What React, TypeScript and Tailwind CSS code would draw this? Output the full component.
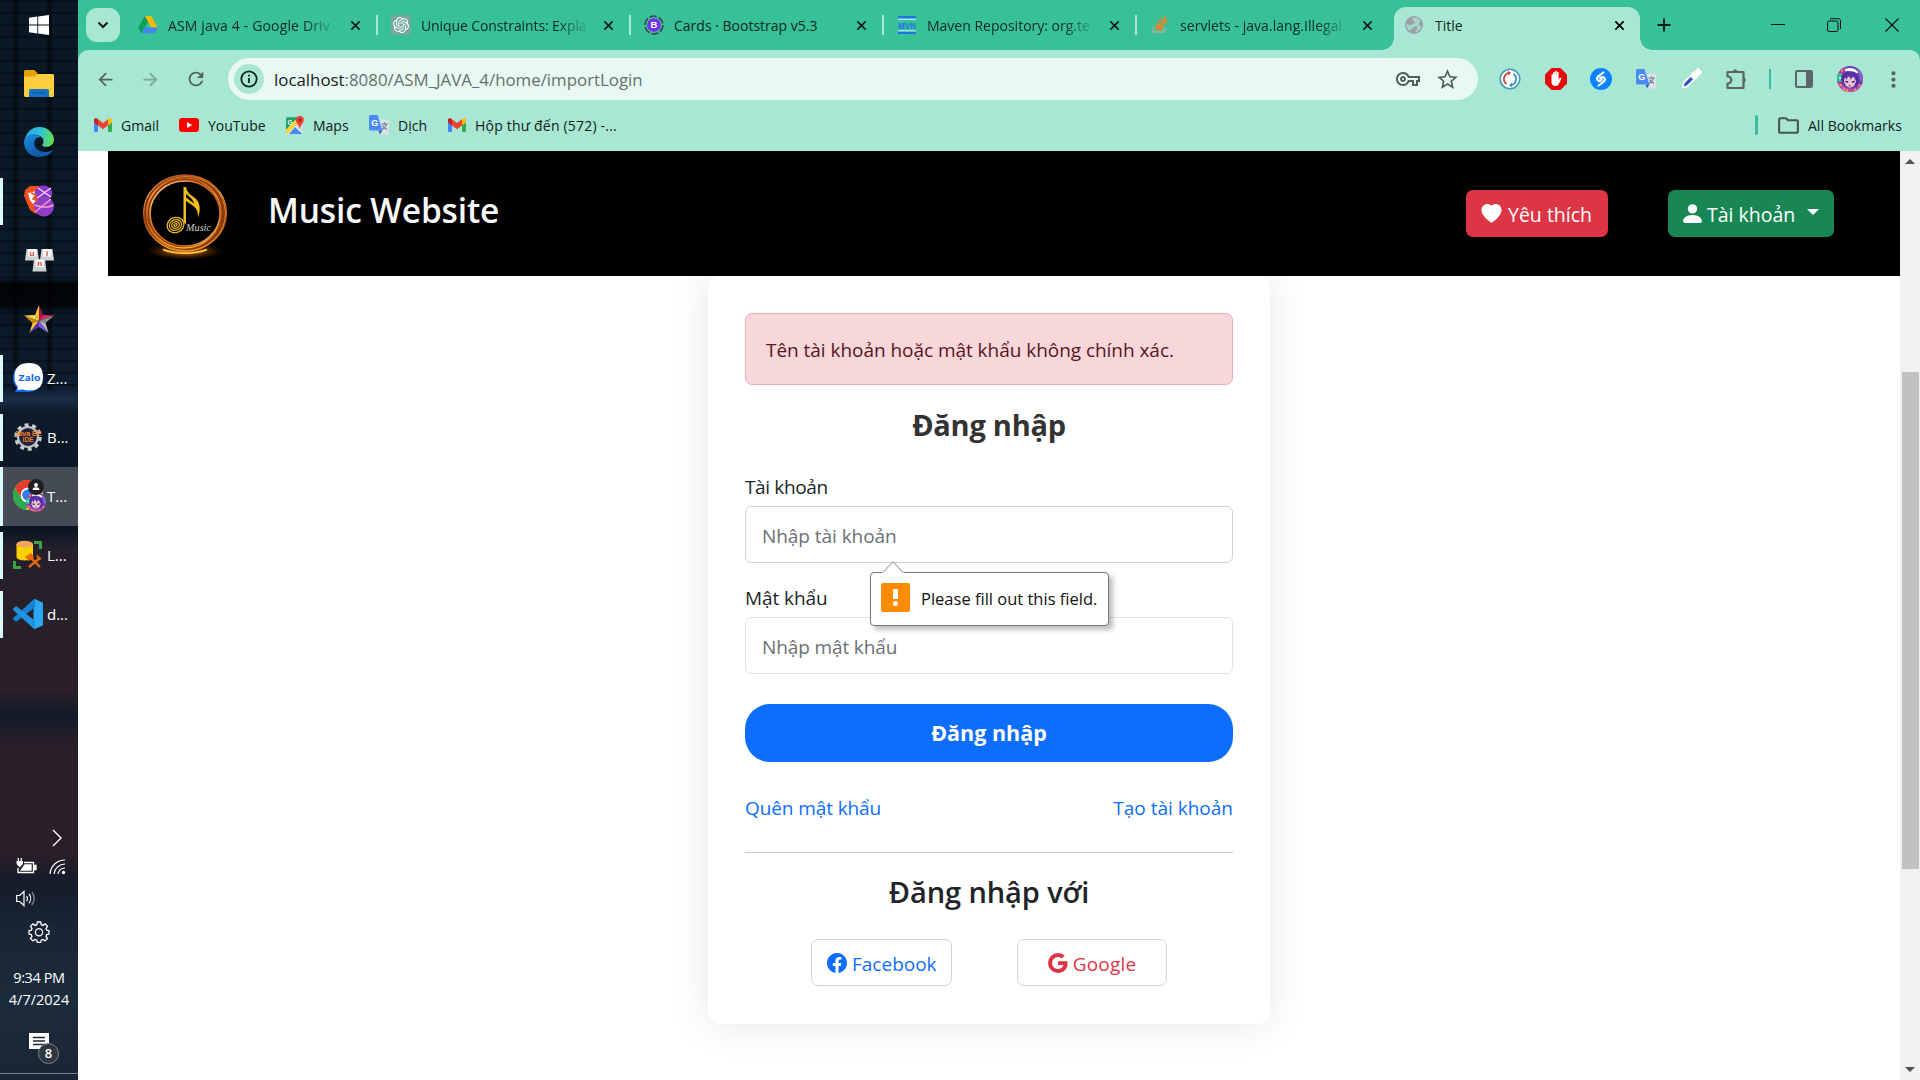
import type { ReactNode } from "react";
import { BsFacebook, BsGoogle, BsHeartFill, BsPersonFill } from "react-icons/bs";
import { MdArrowBack, MdArrowForward, MdMoreVert, MdOutlineFolder, MdOutlineVpnKey, MdRefresh, MdStarBorder } from "react-icons/md";
import { SiOpenai } from "react-icons/si";

/* ---------- shared glyphs ---------- */

function CloseX({ className }: { className: string }) {
  return (
    <svg viewBox="0 0 12 12" className={className} fill="none" stroke="currentColor" strokeWidth="1.9">
      <path d="M1.5 1.5l9 9M10.5 1.5l-9 9" />
    </svg>
  );
}

function DriveIcon() {
  return (
    <svg viewBox="0 0 20 18" className="h-[18px] w-5">
      <path d="M6.8 0h6.4l6.6 11.4h-6.4z" fill="#ffba00" />
      <path d="M6.8 0L10 5.7 3.4 17.2.2 11.6z" fill="#0f9d58" />
      <path d="M6.6 11.4h13.2l-3.2 5.8H3.4z" fill="#4285f4" />
    </svg>
  );
}

function GptIcon() {
  return (
    <div className="flex size-5 items-center justify-center bg-[#75a99c] text-white">
      <SiOpenai className="size-4" />
    </div>
  );
}

function BootstrapIcon() {
  return (
    <svg viewBox="0 0 20 20" className="size-5">
      <circle cx="10" cy="10" r="8.9" fill="none" stroke="#3f4a52" strokeWidth="1.7" strokeDasharray="7.3 2" />
      <circle cx="10" cy="10" r="6.8" fill="#7431f0" />
      <text x="10" y="13.4" textAnchor="middle" fontSize="9.5" fontWeight="700" fill="#fff" fontFamily="Liberation Sans, sans-serif">B</text>
    </svg>
  );
}

function MavenIcon() {
  return (
    <svg viewBox="0 0 18 18" className="size-[18px]">
      <path d="M0 1.2h18M0 16.8h18" stroke="#1d74e8" strokeWidth="2.2" />
      <path d="M0 3.3h18M0 14.8h18" stroke="#d8ecff" strokeWidth="1" />
      <text x="9" y="12.6" textAnchor="middle" fontSize="9.5" fontWeight="700" textLength="18" lengthAdjust="spacingAndGlyphs" fill="#1d74e8" fontFamily="Liberation Sans, sans-serif">MVN</text>
    </svg>
  );
}

function StackIcon() {
  return (
    <svg viewBox="0 0 16 18" className="h-[18px] w-4" fill="none">
      <path d="M1 11.5V16h11.5v-4.5" stroke="#a6b0ab" strokeWidth="1.4" />
      <path d="M3 13.6h7.4M3.2 10.8l7.4.9M4 7.9l7 2.400M6 4.6l6 4.400M9 1.8l4.200 6.200M13 0l1.200 7" stroke="#e0872f" strokeWidth="1.9" />
    </svg>
  );
}

function GlobeIcon() {
  return (
    <svg viewBox="0 0 18 18" className="size-[18px]">
      <circle cx="9" cy="9" r="9" fill="#9aa0a6" />
      <path d="M10 1.500c-2 .6-3 1.400-2.600 2.600.5 1.300 2.800.4 2.600 2.200-.2 1.400-2.400 1-3.400 2.500C5.700 10.200 3 8 1.400 7.300 1.100 11 3 14 5.500 15.600c-.2-1.800.6-2.500 1.900-3 1.600-.7 1-2.200 2.800-2.400 2.300-.2 2.600 1.800 1.600 3.400-.7 1.100-1.600 1.800-1.600 2.700 3.500-.5 6-3.200 6.500-6-1.600.3-2.600-.6-2.800-2-.2-1.600 1.600-1.600 1.300-3.300C14 2.700 12.500 1.600 10 1.500z" fill="#a8e7d3" opacity=".75" />
    </svg>
  );
}

function GmailIcon() {
  return (
    <svg viewBox="0 0 18 14" className="h-[14px] w-[18px]">
      <path d="M0 3h4v11H1.200A1.200 1.200 0 0 1 0 12.800z" fill="#4285f4" />
      <path d="M14 3h4v9.800a1.200 1.200 0 0 1-1.200 1.200H14z" fill="#34a853" />
      <path d="M14 1.200C15.500-.2 18 0 18 2.200V4.500l-4 3z" fill="#fbbc04" />
      <path d="M4 1.200L9 5l5-3.800v6.300L9 11.200 4 7.500z" fill="#ea4335" />
      <path d="M4 1.200C2.500-.2 0 0 0 2.200V4.500l4 3z" fill="#c5221f" />
    </svg>
  );
}

function YoutubeIcon() {
  return (
    <svg viewBox="0 0 20 14" className="h-[14px] w-5">
      <rect width="20" height="14" rx="3.200" fill="#f00" />
      <path d="M8 4v6l5.200-3z" fill="#fff" />
    </svg>
  );
}

function MapsIcon() {
  return (
    <svg viewBox="0 0 18 18" className="size-[18px]">
      <rect x="0" y="1.500" width="16.500" height="16.500" rx="1.500" fill="#e8eaed" />
      <path d="M0 3a1.500 1.500 0 0 1 1.500-1.500H12L0 14z" fill="#1ea362" />
      <path d="M3 18l6-7 7.500 7z" fill="#4a89f3" />
      <path d="M0 14L12 1.500l3 2.500L1.500 18H0z" fill="#fdd835" />
      <path d="M0 3a1.500 1.500 0 0 1 1.500-1.500H10.500L0 12.500z" fill="#1ea362" />
      <path d="M9 9l7.500 7.500V8l-4-2z" fill="#d2d5da" />
      <text x="1.500" y="8.500" fontSize="6.500" fontWeight="700" fill="#fff" fontFamily="Liberation Sans, sans-serif">G</text>
      <path d="M13.800 0a4 4 0 0 1 4 4c0 3-3.300 4.500-4 9-.7-4.500-4-6-4-9a4 4 0 0 1 4-4z" fill="#ea4335" />
      <circle cx="13.800" cy="4" r="1.400" fill="#8f1f17" />
    </svg>
  );
}

function TranslateIcon() {
  return (
    <svg viewBox="0 0 20 20" className="size-5">
      <path d="M8 4.500h10.500A1.500 1.500 0 0 1 20 6v12a1.500 1.500 0 0 1-1.500 1.500H11z" fill="#dde1e6" />
      <path d="M12.500 9h6M15.500 7.500V9M17.500 9c-.7 3-2.500 4.500-4.500 5.500M13.600 10.500c.8 2 2.400 3.200 4.400 4" stroke="#5f7f8c" strokeWidth="1.100" fill="none" />
      <path d="M1.500 0h7L13.500 15.500H1.500A1.500 1.500 0 0 1 0 14V1.500A1.500 1.500 0 0 1 1.500 0z" fill="#4a8af4" />
      <path d="M9.500 15.500h4L11 19.500z" fill="#2f5fc9" />
      <text x="2.200" y="11" fontSize="9" fontWeight="700" fill="#fff" fontFamily="Liberation Sans, sans-serif">G</text>
    </svg>
  );
}

function AvatarFace({ className }: { className: string }) {
  return (
    <svg viewBox="0 0 26 26" className={className}>
      <defs>
        <clipPath id="face"><circle cx="13" cy="13" r="13" /></clipPath>
      </defs>
      <g clipPath="url(#face)">
        <rect width="26" height="26" fill="#6b3fae" />
        <path d="M0 6l5-6h4L5 9l-5 2z" fill="#c2418c" />
        <path d="M0 8l5-1-1 9-4-1z" fill="#2fc39a" />
        <path d="M21 2l5 6v8l-3-2z" fill="#8a62cc" />
        <path d="M0 16l4 1 5 5 9 1 5-4 3-3v10H0z" fill="#c2518a" />
        <path d="M8 3c4-2 10-1.500 13.500 3l-1.500 1.500C17 5 12 4.500 8 5.500z" fill="#fdfaff" />
        <path d="M4.500 12c1-5 6-6.500 9.500-6 5 .5 8 4 7.500 10l-3 4-11-.5z" fill="#4b2a96" />
        <path d="M7.500 12l3.500-1.500 7 .5 1.200 4.500L17 20l-4 1.800L9 20l-2-4z" fill="#ecc4d8" />
        <path d="M7 8.500l2.500 5.500 2-4.500 2.500 4 2-4 3 5.500.5-6-6-3z" fill="#5a34a8" />
        <path d="M8.500 15.500l2.800.5M14.800 16l3-.5" stroke="#3a1f7a" strokeWidth="1.500" />
        <path d="M11 19.500l3-.7-.8 2z" fill="#a03468" />
        <g fill="#ff7aa8">
          <circle cx="3.500" cy="19" r="1.200" />
          <circle cx="7" cy="23" r="1.200" />
          <circle cx="22.500" cy="19.500" r="1.200" />
          <circle cx="18" cy="23.500" r="1.200" />
          <circle cx="5" cy="4.500" r="1.100" />
        </g>
        <circle cx="10" cy="24.500" r="1" fill="#ffd23c" />
        <circle cx="3" cy="12" r="1" fill="#d8fff0" />
      </g>
    </svg>
  );
}

/* ---------- Windows taskbar ---------- */

function WindowsLogo() {
  return (
    <svg viewBox="0 0 20 20" className="size-5" fill="#fff">
      <path d="M0 2.700L8.300 1.600v8H0zM9.200 1.400L20 0v9.600H9.200zM0 10.500h8.300v8L0 17.300zM9.200 10.500H20V20L9.200 18.600z" />
    </svg>
  );
}

function FolderIcon() {
  return (
    <svg viewBox="0 0 30 27" className="h-[27px] w-[30px]">
      <path d="M0 1.500A1.500 1.500 0 0 1 1.500 0h8.800l3 2.800v4H0z" fill="#e6a100" />
      <path d="M0 6.500l11-.2 2.500-2.300h15A1.500 1.500 0 0 1 30 5.500V25.500A1.500 1.500 0 0 1 28.500 27h-27A1.500 1.500 0 0 1 0 25.500z" fill="#fdcf3f" />
      <path d="M5 27v-6a2 2 0 0 1 2-2h16a2 2 0 0 1 2 2v6z" fill="#1273c9" />
      <rect x="8.300" y="22.500" width="13.500" height="1" fill="#0a4d95" />
    </svg>
  );
}

function EdgeIcon() {
  return (
    <svg viewBox="0 0 30 30" className="size-[30px]">
      <defs>
        <linearGradient id="edgeTop" x1="0" y1="0.300" x2="1" y2="0.500">
          <stop offset="0" stopColor="#2aa6e4" />
          <stop offset="0.500" stopColor="#2fc3d6" />
          <stop offset="1" stopColor="#62df52" />
        </linearGradient>
        <linearGradient id="edgeLow" x1="0" y1="0" x2="0.700" y2="1">
          <stop offset="0" stopColor="#1b8fdc" />
          <stop offset="1" stopColor="#0c4f9e" />
        </linearGradient>
      </defs>
      <path d="M1 12C3 4 8.500 0 15 0c9 0 15 6.500 15 12.500 0 4.500-3.400 7.300-7.500 7.300-3 0-4.300-1-4.300-1.800 0-1 1.300-1.300 1.300-3.800 0-3.400-3.500-6.500-8.500-6.500C6 7.700 2.500 10 1 12z" fill="url(#edgeTop)" />
      <path d="M0 15c0-4.500 4.500-8 10-7.800 3 .1 5.500 1.300 7 2.800-4-.5-7 3-7 7 0 6 5 10.500 11 10.500 2.500 0 4.500-.7 6.300-2C24.500 28.300 20 30 15 30 6.500 30 0 23.500 0 15z" fill="url(#edgeLow)" />
      <path d="M10.300 15.500c0 5.500 4.700 9.500 10.700 9.500 3 0 5-.8 6.500-1.600.6-.3 1 .3.600.9C26 27.500 22 29.500 18 28.500 12.500 27 8.500 22.500 10.300 15.500z" fill="#0f5cb0" />
    </svg>
  );
}

function BraveIcon() {
  return (
    <svg viewBox="0 0 30 32" className="h-8 w-[30px]">
      <path d="M1 5l5-4h9l4 5-2 18-5 5-6-4L0 11z" fill="#f4501e" />
      <path d="M4 8l5-1 4-2v5l-3 3 2 3-3 3-3-4z" fill="#fff" />
      <ellipse cx="19.500" cy="8" rx="9" ry="7.500" fill="#8b36c9" />
      <circle cx="20" cy="21.500" r="10" fill="#8f3fc4" />
      <path d="M14 3l13 9M27 3l-14 10" stroke="#f3d7ff" strokeWidth="1.300" />
      <path d="M10.500 20c8 3 14 3 19 0M11 27l16-13" stroke="#f59bd0" strokeWidth="1.500" fill="none" />
      <path d="M7 8l5 2-3 4 5 2" stroke="#f4501e" strokeWidth="1.600" fill="none" />
    </svg>
  );
}

function KeycapIcon() {
  return (
    <svg viewBox="0 0 29 24" className="h-6 w-[29px]" fontFamily="Liberation Sans, sans-serif" fontSize="8" fontWeight="700" textAnchor="middle">
      <path d="M1.500 1h11l1.500 11.500H0z" fill="#d0d1d3" />
      <path d="M3 1h8.500v7.500H3z" fill="#f5f5f6" />
      <path d="M16.500 1h11L29 12.500H15z" fill="#d0d1d3" />
      <path d="M18 1h8.500v7.500H18z" fill="#f5f5f6" />
      <path d="M9 11.500h11L21.500 23.500H7.500z" fill="#d0d1d3" />
      <path d="M10.500 11.500H19v7.500h-8.500z" fill="#f5f5f6" />
      <text x="7" y="7.500" fill="#e23d3d">u</text>
      <text x="22" y="7.500" fill="#e23d3d">i</text>
      <text x="14.700" y="17.500" fill="#e23d3d">n</text>
    </svg>
  );
}

function StarIcon() {
  return (
    <svg viewBox="0 0 30 28" className="h-7 w-[30px]">
      <path d="M15 0v16L11 10z" fill="#f7c325" />
      <path d="M0 10.500l11-.5 4 6z" fill="#f9d548" />
      <path d="M0 10.500L15 16l-6.500 2z" fill="#c58a17" />
      <path d="M15 0l4 10-4 6z" fill="#a3164f" />
      <path d="M30 10.500L19 10l-4 6z" fill="#d92b62" />
      <path d="M30 10.500L15 16l6.500 2z" fill="#8b8e93" />
      <path d="M5.500 28l3-10L15 16z" fill="#f7c325" />
      <path d="M5.500 28L15 22v-6z" fill="#5a2fb4" />
      <path d="M24.500 28l-3-10L15 16z" fill="#b9bcc0" />
      <path d="M24.500 28L15 22v-6z" fill="#8557d6" />
    </svg>
  );
}

function ZaloIcon() {
  return (
    <svg viewBox="0 0 30 30" className="size-[30px]">
      <path d="M0 15C0 5 5 2 15 2s14 5 14 13-5 14-14 14H2l2-4C1 22 0 19 0 15z" fill="#0f68f0" />
      <path d="M1.500 14C1.500 4 7 0 16 0c10 0 14 5 14 14s-4 13.500-14 13.500c-3 0-5-.5-7-1.200-1.500.7-3 .9-4.500.5 0-1 .5-2 .3-3.300C2.500 21.500 1.500 18 1.500 14z" fill="#fff" />
      <text x="16.500" y="17.500" textAnchor="middle" fontSize="9.500" fontWeight="700" fill="#0f68f0" textLength="22" lengthAdjust="spacingAndGlyphs" fontFamily="Open Sans, sans-serif">Zalo</text>
    </svg>
  );
}

function JavaEeIcon() {
  return (
    <svg viewBox="0 0 30 28" className="h-7 w-[30px]">
      <circle cx="15" cy="14" r="12" fill="none" stroke="#c9cbcd" strokeWidth="3.600" strokeDasharray="4 3.540" />
      <circle cx="15" cy="14" r="10" fill="#22223a" stroke="#bfc1c4" strokeWidth="2.200" />
      <text x="15" y="13" textAnchor="middle" fontSize="7" fontWeight="700" fill="#f08226" textLength="27" lengthAdjust="spacingAndGlyphs" fontFamily="Liberation Sans, sans-serif">Java EE</text>
      <text x="15" y="19" textAnchor="middle" fontSize="6.500" fontWeight="700" fill="#f08226" fontFamily="Liberation Sans, sans-serif">IDE</text>
    </svg>
  );
}

function ChromeIcon() {
  return (
    <div className="relative h-[32px] w-[30px]">
      <svg viewBox="0 0 30 30" className="size-[30px]">
        <circle cx="15" cy="15" r="15" fill="#fbc116" />
        <path d="M2 7.500A15 15 0 0 1 28 7.500H15L8.500 18.700z" fill="#e33b2e" />
        <path d="M2 7.500l6.500 11.200L15 22.500 13 30A15 15 0 0 1 2 7.500z" fill="#2da94f" />
        <circle cx="15" cy="15" r="7.400" fill="#fff" />
        <circle cx="15" cy="15" r="5.800" fill="#2b7de9" />
      </svg>
      <AvatarFace className="absolute top-[12px] left-[13px] size-5" />
      <svg viewBox="0 0 16 16" className="absolute -top-px left-[15px] size-4">
        <circle cx="8" cy="8" r="8" fill="#1d1f22" />
        <circle cx="8" cy="6" r="1.900" fill="#fff" />
        <path d="M4.500 11c0-2 1.600-2.700 3.500-2.700s3.500.7 3.500 2.700z" fill="#fff" />
      </svg>
    </div>
  );
}

function DatabaseIcon() {
  return (
    <svg viewBox="0 0 30 30" className="size-[30px]">
      <path d="M21 2.500h6.500V9M1.500 21v6.500H8" fill="none" stroke="#3fa046" strokeWidth="3" />
      <path d="M3.500 4v13c0 4.500 16.500 4.500 16.500 0V4z" fill="#fbd000" />
      <ellipse cx="11.700" cy="4.200" rx="8.300" ry="3.400" fill="#f2a55d" />
      <path d="M16 16l11 11M27.500 17.500L16 27" stroke="#e8690b" strokeWidth="2.400" />
      <path d="M13 17l5-3 2 3-4 3zM24 15l1 3 3 1" stroke="#e8690b" strokeWidth="1.500" fill="#e8690b" />
    </svg>
  );
}

function VsCodeIcon() {
  return (
    <svg viewBox="0 0 30 30" className="size-[30px]">
      <path d="M22 0l7 3.300c.6.300 1 .8 1 1.500v20.400c0 .7-.4 1.200-1 1.500L22 30l-1.500-1V1z" fill="#2aa8f2" />
      <path d="M22 0v8.200L4 22.300c-.5.400-1.200.4-1.700 0L.5 20.700c-.6-.6-.6-1.400 0-2L20.500.6z" fill="#1583cf" />
      <path d="M22 30v-8.200L4 7.700c-.5-.4-1.200-.4-1.700 0L.5 9.300c-.6.600-.6 1.400 0 2L20.500 29.400z" fill="#1f94e0" />
    </svg>
  );
}

type Slot = { icon: ReactNode; label?: string; running?: boolean; active?: boolean };

const slots: Slot[] = [
  { icon: <FolderIcon /> },
  { icon: <EdgeIcon /> },
  { icon: <BraveIcon />, running: true },
  { icon: <KeycapIcon /> },
  { icon: <StarIcon /> },
  { icon: <ZaloIcon />, label: "Z...", running: true },
  { icon: <JavaEeIcon />, label: "B...", running: true },
  { icon: <ChromeIcon />, label: "T...", active: true },
  { icon: <DatabaseIcon />, label: "L...", running: true },
  { icon: <VsCodeIcon />, label: "d...", running: true },
];

function TaskSlot({ icon, label, running, active }: Slot) {
  return (
    <div className={`flex h-[59px] items-center ${active ? "bg-[#444b54]" : ""}`}>
      <div className={`w-[3px] ${active ? "h-[59px] bg-[#dcfbff]" : running ? "h-[47px] bg-[#dcfbff]" : "h-[47px]"}`} />
      {label ? (
        <div className="flex items-center pb-px pl-[10px]">
          <div className="flex w-[30px] justify-center">{icon}</div>
          <span className="pl-1 text-[15px] leading-none text-white">{label}</span>
        </div>
      ) : (
        <div className="flex flex-1 justify-center pr-[3px] pb-px">{icon}</div>
      )}
    </div>
  );
}

function TrayGlyphs() {
  return (
    <div className="flex flex-col text-white">
      <div className="flex h-[18px] justify-end pr-4">
        <svg viewBox="0 0 10 18" className="h-[18px] w-[10px]" fill="none" stroke="#fff" strokeWidth="1.400">
          <path d="M1 1l8 8-8 8" />
        </svg>
      </div>
      <div className="mt-[11px] flex h-[17px] justify-between pr-[12px] pl-[16px]">
        <svg viewBox="0 0 21 17" className="h-[17px] w-[21px]" fill="none" stroke="#fff" strokeWidth="1.300">
          <path d="M8 4.500h9.500v10H2V10" />
          <path d="M18 7.500h2v4h-2z" fill="#fff" />
          <path d="M8.500 6.300h7.200v6.400H4z" fill="#fff" stroke="none" />
          <path d="M.5 3h6.500v2C7 7 5 7.500 3.500 9.500 2.500 7.500.5 7 .5 5z" fill="#fff" stroke="none" />
          <path d="M2.300 0v4M5.200 0v4" />
        </svg>
        <svg viewBox="0 0 17 17" className="h-[17px] w-[17px]" fill="none" stroke="#fff" strokeWidth="1.200">
          <path d="M1 16A15 15 0 0 1 16 2" />
          <path d="M5 16A11 11 0 0 1 16 6" />
          <path d="M9 16a7.500 7.500 0 0 1 7-6" />
          <circle cx="14.500" cy="14.500" r="1.700" fill="#fff" stroke="none" />
        </svg>
      </div>
      <div className="mt-[15px] pl-[16px]">
        <svg viewBox="0 0 21 17" className="h-[17px] w-[21px]" fill="none" stroke="#fff" strokeWidth="1.200">
          <path d="M.7 5.500h3L8 1.500v14l-4.300-4h-3z" />
          <path d="M10.500 6a4 4 0 0 1 0 5M13 4a7 7 0 0 1 0 9" />
          <path d="M15.800 2a10 10 0 0 1 0 13" opacity=".5" />
        </svg>
      </div>
    </div>
  );
}

function Taskbar() {
  return (
    <aside className="flex h-full w-[78px] flex-col bg-[linear-gradient(180deg,#0a1825_0,#0b1a29_278px,#010305_284px,#04070c_306px,#0a1726_312px,#0e1d30_388px,#1b2c48_400px,#0c1a2a_412px,#0a1522_530px,#24202c_548px,#2c1f28_690px,#0f1a28_715px,#2a1f29_745px,#2b1e27_850px,#151c2a_880px,#182534_930px,#1c2b3c_1000px,#1a2635_1080px)]">
      <div className="h-[390px] bg-[repeating-linear-gradient(180deg,rgba(0,0,0,.35)_0_2px,transparent_2px_12px),linear-gradient(90deg,transparent_12px,rgba(0,0,0,.45)_14px_17px,transparent_19px_46px,rgba(0,0,0,.45)_48px_51px,transparent_53px)]">
        <div className="flex h-[54px] items-center justify-center pb-1">
          <WindowsLogo />
        </div>
        {slots.map((s, i) => (
          <TaskSlot key={i} {...s} />
        ))}
      </div>
      <div className="mt-[439px]">
        <TrayGlyphs />
      </div>
      <div className="mt-[14px] flex justify-center">
        <svg viewBox="0 0 22 22" className="size-[22px]" fill="none" stroke="#fff" strokeWidth="1.300">
          <path d="M9.300 1h3.400l.5 2.700 1.700.7 2.200-1.500 2.400 2.400-1.500 2.200.7 1.700 2.300.5v3.400l-2.300.5-.7 1.700 1.500 2.200-2.400 2.400-2.200-1.500-1.700.7-.5 2.400H9.300l-.5-2.400-1.700-.7-2.200 1.500-2.400-2.400 1.500-2.200-.7-1.700L1 13.100V9.700l2.300-.5.7-1.700-1.500-2.200 2.400-2.400 2.200 1.500 1.700-.7z" />
          <circle cx="11" cy="11.200" r="3.600" />
        </svg>
      </div>
      <div className="mt-[24px] flex flex-col items-center text-[14.500px] leading-[22px] text-white">
        <span className="tracking-[-0.400px]">9:34 PM</span>
        <span>4/7/2024</span>
      </div>
      <div className="mt-[22px] flex h-[30px] justify-center">
        <div className="relative h-[30px] w-5">
          <svg viewBox="0 0 20 20" className="size-5">
            <path d="M0 0h20v16h-6v4l-4-4H0z" fill="#fff" />
            <path d="M4 4.500h12M4 8h12M4 11.500h12" stroke="#1c2735" strokeWidth="1.300" />
          </svg>
          <div className="absolute top-[10px] left-[9px] flex size-[21px] items-center justify-center rounded-full border border-[#7d848c] bg-[#30363d] text-[13px] leading-none font-semibold text-white">8</div>
        </div>
      </div>
      <div className="mt-[10px] h-px bg-[#77808a]" />
    </aside>
  );
}

/* ---------- Browser chrome ---------- */

const tabs: { icon: ReactNode; title: string; fade: boolean; spacing: string }[] = [
  { icon: <DriveIcon />, title: "ASM java 4 - Google Driv", fade: true, spacing: "tracking-[0.150px]" },
  { icon: <GptIcon />, title: "Unique Constraints: Expla", fade: true, spacing: "tracking-[-0.100px]" },
  { icon: <BootstrapIcon />, title: "Cards · Bootstrap v5.3", fade: false, spacing: "" },
  { icon: <MavenIcon />, title: "Maven Repository: org.te", fade: true, spacing: "" },
  { icon: <StackIcon />, title: "servlets - java.lang.Illegal", fade: true, spacing: "tracking-[0.050px]" },
];

function TabStrip() {
  return (
    <div className="flex h-[50px] items-end bg-[#38c097] pl-2">
      <button className="mb-2 flex h-[34px] w-[34px] items-center justify-center rounded-[11px] bg-[#a8e7d3]">
        <svg viewBox="0 0 12 8" className="h-2 w-3" fill="none" stroke="#111" strokeWidth="2">
          <path d="M1.500 1.500L6 6l4.500-4.500" />
        </svg>
      </button>
      <div className="flex pl-[5px]">
        {tabs.map((t, i) => (
          <div key={i} className="flex h-[50px] w-[253px] items-center pl-[13px]">
            <div className="flex w-5 justify-center">{t.icon}</div>
            <div className={`ml-[10px] w-[169px] pt-px text-[14px] whitespace-nowrap text-[#0d2b22] ${t.fade ? "[mask-image:linear-gradient(90deg,#000_136px,transparent_170px)]" : ""}`}>
              <span className={t.spacing}>{t.title}</span>
            </div>
            <CloseX className="ml-[13px] size-[11px] text-[#0b1f19]" />
            <div className={`ml-auto h-5 w-[2px] ${i < 4 ? "bg-[#a8e7d3]" : ""}`} />
          </div>
        ))}
      </div>
      <div className="-ml-[8px] size-3 bg-[radial-gradient(circle_at_0_0,transparent_11.500px,#a8e7d3_12px)]" />
      <div className="flex h-[43px] w-[246px] items-center rounded-t-[12px] bg-[#a8e7d3] pb-[7px] pl-[11px]">
        <GlobeIcon />
        <span className="ml-3 text-[14px] text-[#0d2b22]">Title</span>
        <CloseX className="mr-[15px] ml-auto size-[11px] text-black" />
      </div>
      <div className="size-3 bg-[radial-gradient(circle_at_100%_0,transparent_11.500px,#a8e7d3_12px)]" />
      <div className="flex h-[50px] flex-1 items-center">
        <svg viewBox="0 0 14 14" className="ml-[5px] size-[14px]" stroke="#0b1f19" strokeWidth="2">
          <path d="M7 .5v13M.5 7h13" />
        </svg>
        <svg viewBox="0 0 14 14" className="ml-[100px] size-[14px]" stroke="#111" strokeWidth="1">
          <path d="M0 6.500h14" />
        </svg>
        <svg viewBox="0 0 14 14" className="ml-[42px] size-[14px]" fill="none" stroke="#111" strokeWidth="1">
          <rect x=".5" y="3" width="10.500" height="10.500" rx="1.500" />
          <path d="M3 .7h8.500a2 2 0 0 1 2 2V11" />
        </svg>
        <svg viewBox="0 0 14 14" className="ml-[44px] size-[14px]" stroke="#111" strokeWidth="1.100">
          <path d="M.5.500l13 13M13.500.500l-13 13" />
        </svg>
      </div>
    </div>
  );
}

function Toolbar() {
  return (
    <div className="flex h-[58px] items-center pl-[17px] text-[#56625e]">
      <MdArrowBack className="size-[21px]" />
      <MdArrowForward className="ml-[24px] size-[21px] opacity-50" />
      <MdRefresh className="ml-[24px] size-[22px]" />
      <div className="ml-[21px] flex h-[42px] w-[1250px] items-center rounded-full bg-[#e8f8f2] pl-[6px]">
        <div className="flex size-[30px] items-center justify-center rounded-full bg-[#a8e7d3]">
          <svg viewBox="0 0 18 18" className="size-[18px]" fill="none" stroke="#14211d" strokeWidth="1.800">
            <circle cx="9" cy="9" r="7.700" />
            <path d="M9 8v5M9 4.700v1.800" />
          </svg>
        </div>
        <span className="ml-[10px] pt-px text-[16.850px] whitespace-nowrap text-[#66716d]">
          <span className="text-[#15211d]">localhost</span>:8080/ASM_JAVA_4/home/importLogin
        </span>
        <MdOutlineVpnKey className="ml-auto size-[24px] text-[#555d5a]" />
        <MdStarBorder className="mr-[18px] ml-[15px] size-[25px] text-[#555d5a]" />
      </div>
      <svg viewBox="0 0 22 22" className="ml-[21px] size-[22px]">
        <circle cx="11" cy="11" r="9.800" fill="#fff" stroke="#3f9cba" strokeWidth="1.600" />
        <path d="M9.500 5a6.200 6.200 0 0 0-2 11" stroke="#cf3a34" strokeWidth="1.700" fill="none" />
        <path d="M12.500 17a6.200 6.200 0 0 0 2-11" stroke="#2e8bc0" strokeWidth="1.700" fill="none" />
        <path d="M9 2.800l3 2.300-3 2.200z" fill="#cf3a34" />
        <path d="M13 19.200l-3-2.300 3-2.200z" fill="#2e8bc0" />
      </svg>
      <svg viewBox="0 0 22 22" className="ml-[24px] size-[22px]">
        <path d="M6.500 0h9L22 6.500v9L15.500 22h-9L0 15.500v-9z" fill="#e8070c" />
        <path d="M6.500 10.500V6.800c0-1 1.500-1 1.500 0V9l.2-4.500c0-1.100 1.600-1.100 1.600 0V8.500l.3-5c0-1.100 1.600-1.100 1.600 0l.1 5 .3-4c0-1 1.500-1 1.500 0v7l1.100-1.400c.8-.9 2-.2 1.500.8L13.800 16c-.7 1.300-1.500 2-3.300 2-2.500 0-4-1.500-4-4z" fill="#fff" />
      </svg>
      <svg viewBox="0 0 22 22" className="ml-[23px] size-[22px]">
        <circle cx="11" cy="11" r="11" fill="#0a84ff" />
        <path d="M13.300 4.500L8.300 8.400c-1.700 1.400-1.500 3.300-.1 4.200 1.300.8 2.500.2 3.700-.9M8.700 17.500l5-3.900c1.700-1.400 1.500-3.300.1-4.200-1.300-.8-2.500-.2-3.700.9" stroke="#fff" strokeWidth="2.200" fill="none" strokeLinecap="round" />
      </svg>
      <div className="ml-[24px]"><TranslateIcon /></div>
      <svg viewBox="0 0 22 22" className="ml-[24px] size-[22px]">
        <path d="M3 19l1-4L14 5l3 3L7 18z" fill="#fff" stroke="#fff" strokeWidth="2.500" strokeLinejoin="round" />
        <path d="M3.500 18.500l1.300-3.500 6-6 2.200 2.200-6 6z" fill="#2d4fc4" />
        <path d="M12 4.500l5.500 5.500M14 6l4-4.500 3 3L16.500 8z" stroke="#fff" strokeWidth="2.500" fill="#fff" />
      </svg>
      <svg viewBox="0 0 22 22" className="ml-[23px] size-[22px]" fill="none" stroke="#5a6562" strokeWidth="2.200" strokeLinejoin="round">
        <path d="M2.500 4h16v16h-16v-4.500c5 0 5-7 0-7z" />
        <path d="M8 3.500a2.300 2.300 0 0 1 4.400 0zM19 10a2.200 2.200 0 0 1 0 4z" fill="#5a6562" strokeWidth="1" />
      </svg>
      <div className="ml-[22px] h-[20px] w-[2px] bg-[#38c097]" />
      <svg viewBox="0 0 18 18" className="ml-[24px] size-[18px]">
        <rect x="1" y="1" width="16" height="16" rx="1.200" fill="none" stroke="#5f6668" strokeWidth="2" />
        <path d="M11 1h6v16h-6z" fill="#5f6668" />
      </svg>
      <AvatarFace className="ml-[24px] size-[26px]" />
      <MdMoreVert className="ml-[18px] size-[25px] text-[#5a6562]" />
    </div>
  );
}

function Bookmark({ icon, children }: { icon: ReactNode; children: ReactNode }) {
  return (
    <div className="flex items-center">
      {icon}
      <span className="ml-[9px] whitespace-nowrap">{children}</span>
    </div>
  );
}

function BookmarkBar() {
  return (
    <div className="flex h-[43px] items-center pb-[9px] pl-[16px] text-[14px] text-[#0f2119]">
      <div className="w-[85px]"><Bookmark icon={<GmailIcon />}>Gmail</Bookmark></div>
      <div className="w-[107px]"><Bookmark icon={<YoutubeIcon />}>YouTube</Bookmark></div>
      <div className="w-[83px]"><Bookmark icon={<MapsIcon />}>Maps</Bookmark></div>
      <div className="w-[79px]"><Bookmark icon={<TranslateIcon />}>Dịch</Bookmark></div>
      <div className="tracking-[0.200px]"><Bookmark icon={<GmailIcon />}>Hộp thư đến (572) -...</Bookmark></div>
      <div className="ml-auto flex items-center pr-[18px]">
        <div className="mr-[18px] h-5 w-[3px] rounded bg-[#38c097]" />
        <MdOutlineFolder className="size-[25px] text-[#4a5450]" />
        <span className="ml-[7px] tracking-[0.060px]">All Bookmarks</span>
      </div>
    </div>
  );
}

/* ---------- Page ---------- */

function MusicLogo() {
  return (
    <svg viewBox="0 0 100 100" className="h-[100px] w-[100px]">
      <defs>
        <linearGradient id="fire" x1="0" y1="0" x2="0" y2="1">
          <stop offset="0" stopColor="#b5561a" />
          <stop offset="0.250" stopColor="#f0a04a" />
          <stop offset="0.600" stopColor="#a8480f" />
          <stop offset="1" stopColor="#ffb428" />
        </linearGradient>
        <linearGradient id="fireIn" x1="0" y1="0" x2="1" y2="1">
          <stop offset="0" stopColor="#fff0c0" />
          <stop offset="0.350" stopColor="#e2711d" />
          <stop offset="0.700" stopColor="#c55a12" />
          <stop offset="1" stopColor="#ffe9a0" />
        </linearGradient>
        <radialGradient id="glow">
          <stop offset="0" stopColor="#ff9a1a" />
          <stop offset="0.500" stopColor="#a04d05" stopOpacity=".6" />
          <stop offset="1" stopColor="#401c00" stopOpacity="0" />
        </radialGradient>
      </defs>
      <ellipse cx="50" cy="87" rx="40" ry="9" fill="url(#glow)" />
      <ellipse cx="50" cy="49.500" rx="38" ry="35" fill="none" stroke="#8c3a0a" strokeWidth="7" />
      <ellipse cx="50" cy="49" rx="41.500" ry="38" fill="none" stroke="url(#fire)" strokeWidth="1.300" />
      <ellipse cx="51" cy="49.500" rx="39.500" ry="37" fill="none" stroke="#e27a26" strokeWidth="1" />
      <ellipse cx="49" cy="49" rx="37" ry="35" fill="none" stroke="url(#fire)" strokeWidth="1.400" />
      <ellipse cx="50" cy="49.500" rx="35" ry="32.500" fill="#000" stroke="url(#fireIn)" strokeWidth="1.600" />
      <path d="M28 85.500c12 5 32 5 44 0" stroke="#ffd24a" strokeWidth="1.500" fill="none" />
      <g fill="none" stroke="#e8b820" strokeWidth="1.300" transform="rotate(-20 40.500 61)">
        <ellipse cx="40.500" cy="61" rx="8.500" ry="7.500" />
        <ellipse cx="40.500" cy="61" rx="6.200" ry="5.300" />
        <ellipse cx="40.500" cy="61" rx="3.900" ry="3.200" />
        <ellipse cx="40.500" cy="61" rx="1.600" ry="1.200" />
      </g>
      <path d="M48.500 23l2.500 0c1 6 5 8 9 11 5 4 6 11 3 20 .5-7-2-10-6-13L51 37v23.500L48.500 58zM51 30v3.500l8 6c-.5-3-4.500-7-8-9.500z" fill="#f0bd1e" fillRule="evenodd" />
      <text x="51" y="66.500" fontSize="10" fontStyle="italic" fill="#cfcfcf" textLength="25" lengthAdjust="spacingAndGlyphs" fontFamily="Liberation Serif, serif">Music</text>
    </svg>
  );
}

function Navbar() {
  return (
    <nav className="ml-[30px] flex h-[125px] items-center bg-black text-white">
      <div className="ml-[27px]"><MusicLogo /></div>
      <h1 className="ml-[33px] pb-1.5 text-[33.500px] leading-none font-semibold tracking-[-0.150px] text-[#f8f9fa]">Music Website</h1>
      <button className="ml-auto flex h-[47px] w-[142px] items-center rounded-[7px] bg-[#dc3545] pl-[15px] text-[19.500px]">
        <BsHeartFill className="mt-px h-[20px] w-[21px]" />
        <span className="ml-[6px] pt-0.5 whitespace-nowrap">Yêu thích</span>
      </button>
      <button className="mr-[66px] ml-[60px] flex h-[47px] w-[166px] items-center rounded-[7px] bg-[#198754] pl-[12px] text-[19.500px]">
        <BsPersonFill className="size-[25px]" />
        <span className="ml-[2px] pt-0.5 whitespace-nowrap">Tài khoản</span>
        <div className="mb-1 ml-[12px] border-x-[6px] border-t-[6px] border-x-transparent border-t-white" />
      </button>
    </nav>
  );
}

function ValidationBubble() {
  return (
    <div className="absolute top-[54px] left-[124px] z-10 w-[239px]">
      <svg viewBox="0 0 22 12" className="relative z-10 -mb-px ml-[12px] block h-3 w-[22px]">
        <path d="M0 12L11 .7 22 12z" fill="#fff" />
        <path d="M1 11.300L11 .700 21 11.300" fill="none" stroke="#a8a8a8" strokeWidth="1.100" />
      </svg>
      <div className="flex h-[54px] items-center rounded-[4px] border border-[#767676] bg-white pl-[10px] shadow-[4px_4px_5px_rgba(0,0,0,.25)]">
        <div className="mb-[3px] flex size-[29px] flex-col items-center justify-center gap-[2px] rounded-[2px] bg-[#ff8c00]">
          <div className="h-[10px] w-[5px] bg-white" />
          <div className="size-[5px] rounded-full bg-white" />
        </div>
        <span className="ml-[11px] pt-px text-[16.500px] whitespace-nowrap text-[#111]">Please fill out this field.</span>
      </div>
    </div>
  );
}

function LoginCard() {
  return (
    <section className="mx-auto flex h-[748px] w-[562px] flex-col rounded-[12px] bg-white px-[37px] pt-[37px] text-[19px] text-[#212529] shadow-[0_0_40px_rgba(0,0,0,.1)]">
      <div className="flex h-[72px] items-center rounded-[7px] border border-[#f1aeb5] bg-[#f8d7da] pt-[2px] pl-[20px] tracking-[-0.040px] text-[#58151c]">
        Tên tài khoản hoặc mật khẩu không chính xác.
      </div>
      <h2 className="mt-[18px] text-center text-[29px] leading-[44px] font-bold tracking-[-0.250px] text-[#333]">Đăng nhập</h2>
      <label className="mt-[25px] leading-[30px] tracking-[-0.350px]">Tài khoản</label>
      <div className="relative mt-[4px] flex h-[57px] items-center rounded-[6px] border border-[#ced4da] pt-[3px] pl-[16px] text-[#6b7075]">
        <span className="tracking-[-0.050px]">Nhập tài khoản</span>
        <ValidationBubble />
      </div>
      <label className="mt-[20px] leading-[30px] tracking-[-0.080px]">Mật khẩu</label>
      <div className="mt-[4px] flex h-[57px] items-center rounded-[6px] border border-[#dee2e6] pt-[3px] pl-[16px] tracking-[-0.120px] text-[#6b7075]">
        Nhập mật khẩu
      </div>
      <button className="mt-[30px] h-[58px] rounded-[25px] bg-[#0d6efd] text-[21.500px] leading-[58px] font-bold text-white">Đăng nhập</button>
      <div className="mt-[31px] flex justify-between leading-[30px] text-[#0d6efd]">
        <span className="tracking-[-0.100px]">Quên mật khẩu</span>
        <span>Tạo tài khoản</span>
      </div>
      <div className="mt-[29px] h-px bg-[#c8c9ca]" />
      <h3 className="mt-[17px] text-center text-[29px] leading-[44px] font-semibold tracking-[-0.100px]">Đăng nhập với</h3>
      <div className="mt-[25px] ml-[66px] flex">
        <button className="flex h-[47px] w-[141px] items-center rounded-[7px] border border-[#ced4da] pt-px pl-[15px] text-[#0d6efd]">
          <BsFacebook className="size-[20px]" />
          <span className="ml-[5px] pt-[2px]">Facebook</span>
        </button>
        <button className="ml-[65px] flex h-[47px] w-[150px] items-center justify-center rounded-[7px] border border-[#ced4da] pt-px text-[#dc3545]">
          <BsGoogle className="size-[20px]" />
          <span className="ml-[5px] pt-[2px] tracking-[0.200px]">Google</span>
        </button>
      </div>
    </section>
  );
}

function ScrollBar() {
  return (
    <div className="flex w-5 flex-col items-center bg-[#f1f1f1]">
      <div className="mt-[8px] border-x-[5px] border-b-[5px] border-x-transparent border-b-[#505050]" />
      <div className="mt-[208px] h-[497px] w-[17px] bg-[#c1c1c1]" />
      <div className="mt-auto mb-[8px] border-x-[5px] border-t-[5px] border-x-transparent border-t-[#505050]" />
    </div>
  );
}

export default function App() {
  return (
    <div className="flex h-[1080px] w-[1920px] overflow-hidden bg-white font-['Open_Sans','Noto_Sans',sans-serif]">
      <Taskbar />
      <div className="flex flex-1 flex-col bg-[#38c097]">
        <TabStrip />
        <div className="h-[101px] rounded-t-[10px] bg-[#a8e7d3]">
          <Toolbar />
          <BookmarkBar />
        </div>
        <div className="flex flex-1 overflow-hidden bg-white">
          <main className="flex-1">
            <Navbar />
            <div className="h-[804px] overflow-hidden">
              <LoginCard />
            </div>
          </main>
          <ScrollBar />
        </div>
      </div>
    </div>
  );
}
